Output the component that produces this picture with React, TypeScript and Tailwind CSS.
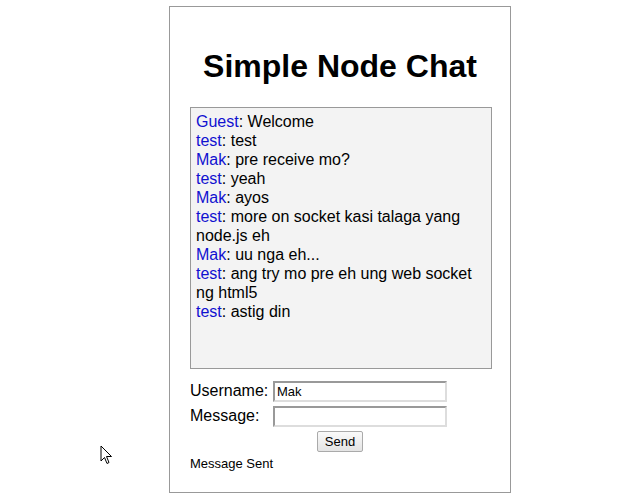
import React from "react";

const msgs: [string, string][] = [
  ["Guest", "Welcome"],
  ["test", "test"],
  ["Mak", "pre receive mo?"],
  ["test", "yeah"],
  ["Mak", "ayos"],
  ["test", "more on socket kasi talaga yang node.js eh"],
  ["Mak", "uu nga eh..."],
  ["test", "ang try mo pre eh ung web socket ng html5"],
  ["test", "astig din"],
];

export default function App() {
  return (
    <div className="relative w-[640px] h-[500px] bg-white overflow-hidden" style={{ fontFamily: '"Liberation Sans", Arial, sans-serif' }}>
      <div className="ml-[169px] mt-[6px] w-[342px] h-[487px] border border-[#999] px-[20px] box-border">
        <h1 className="mt-[41px] text-center text-[32px] font-bold leading-[37px] text-black">Simple Node Chat</h1>
        <div className="mt-[22px] w-[302px] h-[262px] border border-[#999] bg-[#f3f3f3] pl-[5px] pr-[5px] pt-[4px] text-[16px] leading-[19px] text-black">
          {msgs.map(([u, m], i) => (
            <p key={i} className="m-0">
              <span className="text-[#1010d0]">{u}</span>: {m}
            </p>
          ))}
        </div>
        <div className="mt-[12px] flex items-center h-[21px] text-[16px] leading-[18px]">
          <span className="w-[83px] -mt-[1px]">Username:</span>
          <div className="w-[174px] h-[21px] border-2 border-t-[#999] border-l-[#999] border-b-[#ddd] border-r-[#ddd] bg-white text-[13px] leading-[17px] pl-[2px]">Mak</div>
        </div>
        <div className="mt-[4px] flex items-center h-[21px] text-[16px] leading-[18px]">
          <span className="w-[83px] -mt-[1px]">Message:</span>
          <div className="w-[174px] h-[21px] border-2 border-t-[#999] border-l-[#999] border-b-[#ddd] border-r-[#ddd] bg-white"></div>
        </div>
        <div className="mt-[4px] flex justify-center">
          <div className="w-[46px] h-[21px] border border-[#aaa] rounded-[2px] bg-gradient-to-b from-[#fafafa] to-[#e4e4e4] text-[13px] flex items-center justify-center">Send</div>
        </div>
        <div className="mt-[4px] text-[13px] leading-[15px]">Message Sent</div>
      </div>
      <svg className="absolute left-[100px] top-[445px]" width="14" height="21" viewBox="0 0 14 21">
        <path d="M1 1 L1 16 L4.5 12.5 L7 18.5 L9 17.5 L6.5 11.5 L11.5 11.5 Z" fill="white" stroke="black" strokeWidth="1" />
      </svg>
    </div>
  );
}
